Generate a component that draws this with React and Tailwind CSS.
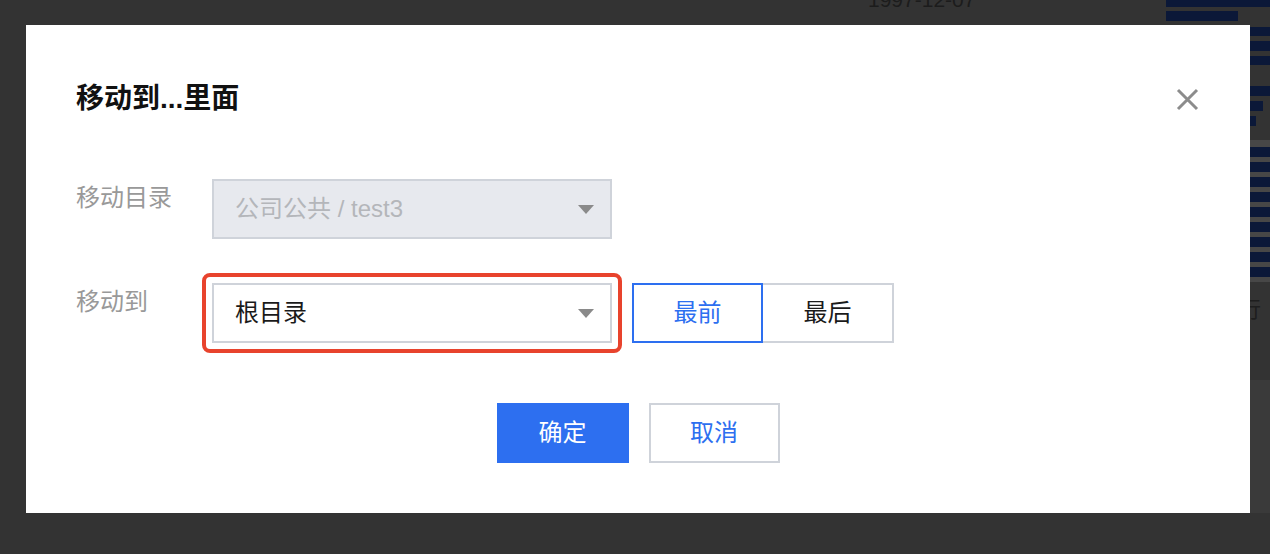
import React from "react";

const Arrow = () => (
  <svg width="16" height="9" viewBox="0 0 16 9" className="shrink-0">
    <path d="M0 0h16L8 9z" fill="#8a8a8a" />
  </svg>
);

const App = () => {
  const stripeBars = [147, 162, 177, 192, 207, 222, 237, 252, 267];

  return (
    <div className="relative h-[554px] w-[1270px] overflow-hidden bg-[#333333] pl-[26px] pt-[25px] font-['Liberation_Sans','Noto_Sans_CJK_SC',sans-serif]">
      {/* page behind the mask */}
      <div className="absolute left-[868px] top-[-16px] text-[21px] text-[#1c1c1c]">1997-12-07</div>
      <div className="absolute left-[1166px] top-0 h-[7px] w-[104px] bg-[#0b1838]" />
      <div className="absolute left-[1166px] top-[11px] h-[10px] w-[72px] bg-[#0b1838]" />
      <div className="absolute left-[1250px] top-[27px] flex w-[20px] flex-col gap-[5px]">
        <div className="h-[9px] bg-[#0b1838]" />
        <div className="h-[10px] bg-[#0b1838]" />
        <div className="h-[9px] bg-[#0b1838]" />
        <div className="mt-[16px] h-[10px] bg-[#0b1838]" />
        <div className="h-[10px] w-[13px] bg-[#0b1838]" />
        <div className="h-[10px] w-[6px] bg-[#0b1838]" />
      </div>
      <div className="absolute left-[1250px] top-[140px] h-[142px] w-[20px] bg-[#474747]">
        {stripeBars.map((y) => (
          <div key={y} className="mt-[5px] h-[10px] bg-[#0b1838] first:mt-[7px]" />
        ))}
      </div>
      <div className="absolute left-[1239px] top-[293px] text-[22px] text-[#1e1e1e]">行</div>
      <div className="absolute left-[1250px] top-[380px] h-[133px] w-[20px] bg-[#3a3a3a]" />

      {/* dialog */}
      <div className="relative flex h-[488px] w-[1224px] flex-col bg-white px-[50px]">
        <div className="mt-[54px] flex h-[40px] items-center justify-between">
          <h2 className="text-[28px] font-bold text-[#111]">移动到...里面</h2>
          <button className="mr-[1px] flex h-[24px] w-[24px] items-center justify-center">
            <svg width="23" height="23" viewBox="0 0 23 23">
              <path d="M2 2l19 19M21 2L2 21" stroke="#8c8c8c" strokeWidth="3" />
            </svg>
          </button>
        </div>

        <div className="mt-[60px] flex">
          <div className="mt-[4px] w-[136px] text-[24px] leading-[30px] text-[#999]">移动目录</div>
          <div className="flex h-[60px] w-[400px] items-center justify-between border-2 border-[#cfd3da] bg-[#e7e9ee] pl-[21px] pr-[16px]">
            <span className="text-[24px] text-[#b4b6ba]">公司公共 / test3</span>
            <Arrow />
          </div>
        </div>

        <div className="mt-[44px] flex">
          <div className="mt-[4px] w-[136px] text-[24px] leading-[30px] text-[#999]">移动到</div>
          <div className="-m-[10px] rounded-[8px] border-4 border-[#e8432d] p-[6px]">
            <div className="flex h-[60px] w-[400px] items-center justify-between border-2 border-[#cfd3da] bg-white pl-[21px] pr-[16px]">
              <span className="text-[24px] text-[#1a1a1a]">根目录</span>
              <Arrow />
            </div>
          </div>
          <div className="ml-[20px] flex">
            <button className="h-[60px] w-[131px] border-2 border-[#2d6ff0] text-[24px] text-[#2d6ff0]">最前</button>
            <button className="h-[60px] w-[131px] border-2 border-l-0 border-[#cfd3da] text-[24px] text-[#1a1a1a]">最后</button>
          </div>
        </div>

        <div className="mt-[60px] flex justify-center gap-[20px]">
          <button className="h-[60px] w-[132px] bg-[#2d6ff0] text-[24px] text-white">确定</button>
          <button className="h-[60px] w-[131px] border-2 border-[#cfd3da] text-[24px] text-[#2d6ff0]">取消</button>
        </div>
      </div>
    </div>
  );
};

export default App;
